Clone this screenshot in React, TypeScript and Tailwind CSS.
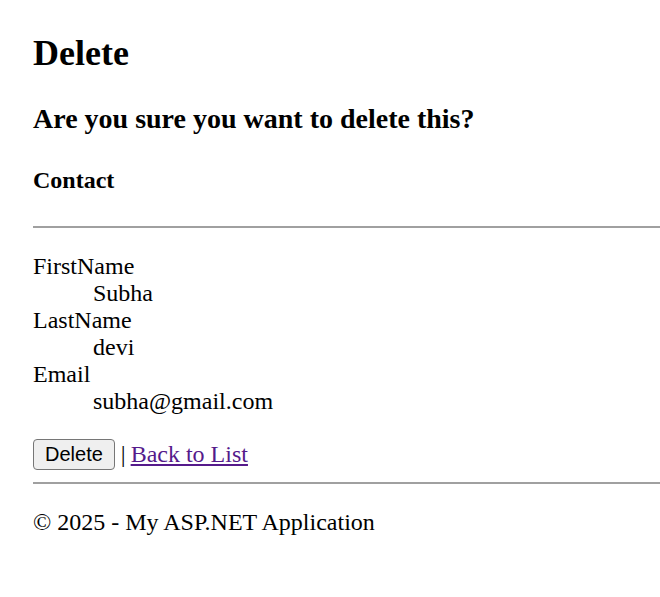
import React from 'react';

const fields = [
  { label: 'FirstName', value: 'Subha' },
  { label: 'LastName', value: 'devi' },
  { label: 'Email', value: 'subha@gmail.com' },
];

export default function App() {
  return (
    <div className="min-h-[597px] bg-white pl-[33px] pt-[33px] font-['Liberation_Serif','Times_New_Roman',serif] text-black">
      <h1 className="text-[36px] font-bold leading-[41px]">Delete</h1>

      <h2 className="mt-[29px] text-[28px] font-bold leading-[32px]">Are you sure you want to delete this?</h2>

      <div>
        <h4 className="mt-[32px] text-[24px] font-bold leading-[27px]">Contact</h4>
        <hr className="mt-[32px] border-0 border-t-[2px] border-t-[#a0a0a0]" />

        <dl className="mt-[25px] text-[24px] leading-[27px]">
          {fields.map(f => (
            <React.Fragment key={f.label}>
              <dt>{f.label}</dt>
              <dd className="pl-[60px]">{f.value}</dd>
            </React.Fragment>
          ))}
        </dl>
      </div>

      <form className="mt-[24px] flex items-center text-[24px] leading-[27px]" onSubmit={e => e.preventDefault()}>
        <button
          type="submit"
          className="h-[31px] rounded-[4px] border border-[#767676] bg-[#efefef] px-[11px] font-['Liberation_Sans',Arial,sans-serif] text-[20px] leading-[23px] text-black"
        >
          Delete
        </button>
        <span className="ml-[6px] text-black">|</span>
        <a href="#" className="ml-[5px] text-[#551a8b] underline">Back to List</a>
      </form>

      <hr className="mt-[12px] border-0 border-t-[2px] border-t-[#a0a0a0]" />
      <footer>
        <p className="mt-[25px] text-[24px] leading-[27px]">© 2025 - My ASP.NET Application</p>
      </footer>
    </div>
  );
}
